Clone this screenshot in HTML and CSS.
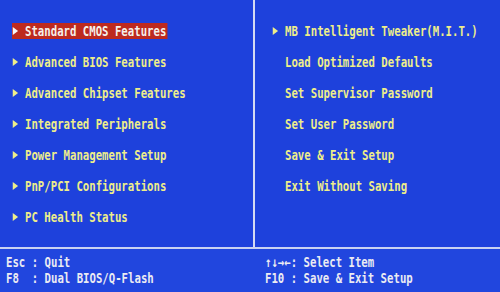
FILE: index.html
```html
<!DOCTYPE html>
<html>
<head>
<meta charset="utf-8">
<link rel="stylesheet" href="styles.css">
</head>
<body>
<div class="screen">
  <div class="menus">
    <div class="col col-left">
      <div class="item"><span class="label selected"><span class="arrow"></span><span class="text">Standard CMOS Features</span></span></div>
      <div class="item"><span class="label"><span class="arrow"></span><span class="text">Advanced BIOS Features</span></span></div>
      <div class="item"><span class="label"><span class="arrow"></span><span class="text">Advanced Chipset Features</span></span></div>
      <div class="item"><span class="label"><span class="arrow"></span><span class="text">Integrated Peripherals</span></span></div>
      <div class="item"><span class="label"><span class="arrow"></span><span class="text">Power Management Setup</span></span></div>
      <div class="item"><span class="label"><span class="arrow"></span><span class="text">PnP/PCI Configurations</span></span></div>
      <div class="item"><span class="label"><span class="arrow"></span><span class="text">PC Health Status</span></span></div>
    </div>
    <div class="divider"></div>
    <div class="col col-right">
      <div class="item"><span class="label"><span class="arrow"></span><span class="text">MB Intelligent Tweaker(M.I.T.)</span></span></div>
      <div class="item"><span class="label"><span class="arrow none"></span><span class="text">Load Optimized Defaults</span></span></div>
      <div class="item"><span class="label"><span class="arrow none"></span><span class="text">Set Supervisor Password</span></span></div>
      <div class="item"><span class="label"><span class="arrow none"></span><span class="text">Set User Password</span></span></div>
      <div class="item"><span class="label"><span class="arrow none"></span><span class="text">Save &amp; Exit Setup</span></span></div>
      <div class="item"><span class="label"><span class="arrow none"></span><span class="text">Exit Without Saving</span></span></div>
    </div>
  </div>
  <div class="footer">
    <div class="keys keys-left">
      <div class="key">Esc : Quit</div>
      <div class="key">F8  : Dual BIOS/Q-Flash</div>
    </div>
    <div class="keys keys-right">
      <div class="key">↑↓→←: Select Item</div>
      <div class="key">F10 : Save &amp; Exit Setup</div>
    </div>
  </div>
</div>
</body>
</html>
```

FILE: styles.css
```css
html, body {
  margin: 0;
  padding: 0;
}

body {
  width: 500px;
  height: 292px;
  overflow: hidden;
  background: #1e41dc;
  font-family: "DejaVu Sans Mono", "Liberation Mono", monospace;
  font-weight: bold;
  font-size: 14px;
}

.screen {
  display: flex;
  flex-direction: column;
  width: 500px;
  height: 292px;
  overflow: hidden;
}

.menus {
  display: flex;
  flex: none;
  height: 247px;
  border-bottom: 2px solid #c9d2f2;
}

.col {
  display: flex;
  flex-direction: column;
  padding-top: 15px;
  overflow: hidden;
  box-sizing: border-box;
}

.col-left {
  flex: none;
  width: 253px;
  padding-left: 12px;
}

.col-right {
  flex: 1;
  min-width: 0;
  padding-left: 17px;
}

.divider {
  flex: none;
  width: 2px;
  background: #d4daf2;
}

.item {
  height: 31px;
  flex: none;
  display: flex;
  align-items: center;
}

.label {
  display: inline-flex;
  align-items: center;
  flex: none;
  height: 16px;
  line-height: 16px;
  padding-right: 1.3px;
  transform: scaleX(0.762);
  transform-origin: left center;
  color: #eeee8a;
  white-space: pre;
}

.label.selected {
  background: #bd2a1f;
  color: #f4f0ea;
}

.arrow {
  width: 17.1px;
  height: 16px;
  flex: none;
  display: flex;
  align-items: center;
}

.arrow::before {
  content: "";
  display: block;
  margin-left: 1px;
  border-top: 4.5px solid transparent;
  border-bottom: 4.5px solid transparent;
  border-left: 7px solid #eeee8a;
}

.selected .arrow::before {
  border-left-color: #f6f6f6;
}

.arrow.none::before {
  display: none;
}

.footer {
  flex: 1;
  display: flex;
  background: #2146de;
  padding-top: 6px;
  box-sizing: border-box;
}

.keys {
  display: flex;
  flex-direction: column;
  overflow: hidden;
}

.keys-left {
  flex: none;
  width: 265px;
  padding-left: 6px;
  box-sizing: border-box;
}

.keys-right {
  flex: 1;
  min-width: 0;
}

.key {
  height: 15.5px;
  line-height: 15.5px;
  color: #ebebf2;
  white-space: pre;
  transform: scaleX(0.762);
  transform-origin: left center;
}
```
